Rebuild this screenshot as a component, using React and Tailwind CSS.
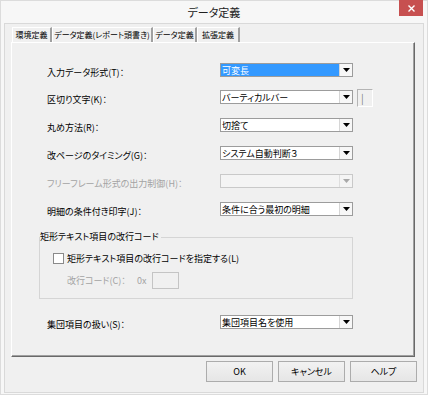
import React from 'react';

const Arrow = ({ disabled }) => (
    <svg width="7" height="4" viewBox="0 0 7 4">
        <polygon points="0,0 7,0 3.5,4" fill={disabled ? '#a8a8a8' : '#000'} />
    </svg>
);

const Combo = ({ value, selected, disabled }) => (
    <div
        className={`flex h-[14px] w-[133px] border ${
            disabled ? 'border-[#c9c9c9] bg-[#f4f4f4]' : 'border-[#9c9c9c] bg-white'
        }`}
    >
        <div
            className={`flex-1 flex items-center pl-[1px] text-[9px] leading-none whitespace-nowrap overflow-hidden ${
                selected ? 'bg-[#3399ff] text-white' : 'text-black'
            }`}
        >
            {value}
        </div>
        <div
            className={`w-[13px] flex items-center justify-center border-l ${
                disabled ? 'border-[#dedede] bg-[#f4f4f4]' : 'border-[#d6d6d6] bg-[#f7f7f7]'
            }`}
        >
            <Arrow disabled={disabled} />
        </div>
    </div>
);

const Row = ({ label, disabled, className, children }) => (
    <div className={`flex items-start h-[14px] pl-[8px] ${className}`}>
        <div
            className={`w-[173px] pt-[3px] leading-[14px] text-[9px] whitespace-nowrap ${
                disabled ? 'text-[#a3a3a3]' : 'text-black'
            }`}
        >
            {label}
        </div>
        {children}
    </div>
);

const tabs = [
    { label: '環境定義', w: 'w-[40px]' },
    { label: 'データ定義(レポート頭書き)', w: 'w-[101px]' },
    { label: 'データ定義', w: 'w-[44px]' },
    { label: '拡張定義', w: 'w-[43px]' },
];

export default function App() {
    return (
        <div className="w-[428px] h-[395px] bg-[#f7f7f7] border border-[#dcdcdc] flex flex-col font-['Noto_Sans_CJK_JP','Noto_Sans',sans-serif] [font-feature-settings:'palt'] select-none">
            {/* Title bar */}
            <div className="relative h-[22px] flex items-center justify-center">
                <span className="text-[11px] text-[#202020] pt-[1px]">データ定義</span>
                <div className="absolute right-[4px] -top-[1px] w-[24px] h-[16px] bg-[#c75050] flex items-center justify-center">
                    <svg width="7" height="7" viewBox="0 0 7 7">
                        <path d="M0.5 0.5 L6.5 6.5 M6.5 0.5 L0.5 6.5" stroke="#fff" strokeWidth="1.4" />
                    </svg>
                </div>
            </div>

            {/* Client area */}
            <div className="mx-[3px] mb-[1px] flex-1 bg-[#f0f0f0] border border-[#d9d9d9] flex flex-col">
                <div className="pt-[3px] pl-[6px] flex flex-col">
                    {/* Tabs */}
                    <div className="flex h-[15px] ml-[1px]">
                        {tabs.map((t) => (
                            <div
                                key={t.label}
                                className={`${t.w} flex items-center justify-center text-[8px] leading-none whitespace-nowrap text-black border-l border-t border-white border-r-2 border-r-[#a0a0a0] bg-[#f0f0f0]`}
                            >
                                {t.label}
                            </div>
                        ))}
                    </div>

                    {/* Panel */}
                    <div className="w-[404px] h-[315px] border-t border-l border-white border-r border-b border-r-[#696969] border-b-[#696969] shadow-[inset_-1px_-1px_0_#a0a0a0] pl-[27px] pt-[20px] flex flex-col">
                        <Row label="入力データ形式(T)：">
                            <Combo value="可変長" selected />
                        </Row>
                        <Row label="区切り文字(K)：" className="mt-[13px]">
                            <Combo value="バーティカルバー" />
                            <div className="ml-[4px] -mt-[1px] w-[16px] h-[18px] border border-[#b4b4b4] border-r-white border-b-white bg-[#f0f0f0] text-[10px] text-[#7a7a7a] leading-[16px] pl-[3px]">
                                |
                            </div>
                        </Row>
                        <Row label="丸め方法(R)：" className="mt-[14px]">
                            <Combo value="切捨て" />
                        </Row>
                        <Row label="改ページのタイミング(G)：" className="mt-[14px]">
                            <Combo value="システム自動判断３" />
                        </Row>
                        <Row label="フリーフレーム形式の出力制御(H)：" disabled className="mt-[14px]">
                            <Combo value="" disabled />
                        </Row>
                        <Row label="明細の条件付き印字(J)：" className="mt-[14px]">
                            <Combo value="条件に合う最初の明細" />
                        </Row>

                        {/* Group box */}
                        <div className="relative mt-[21px] w-[314px] h-[62px] border border-[#d5d5d5] pl-[13px] pt-[15px]">
                            <span className="absolute left-0 -top-[7px] bg-[#f0f0f0] pr-[2px] text-[9px] leading-[12px] text-black whitespace-nowrap">
                                矩形テキスト項目の改行コード
                            </span>
                            <div className="flex items-center h-[11px]">
                                <div className="w-[11px] h-[11px] border border-[#8a8a8a] bg-white" />
                                <span className="ml-[3px] text-[9px] leading-none text-black whitespace-nowrap">
                                    矩形テキスト項目の改行コードを指定する(L)
                                </span>
                            </div>
                            <div className="flex items-center mt-[8px] h-[17px] pl-[14px] text-[9px] text-[#a3a3a3] whitespace-nowrap">
                                <span className="w-[70px]">改行コード(C)：</span>
                                <span className="w-[15px]">0x</span>
                                <div className="w-[27px] h-[17px] border border-[#c4c4c4] bg-[#f0f0f0]" />
                            </div>
                        </div>

                        <Row label="集団項目の扱い(S)：" className="mt-[16px]">
                            <Combo value="集団項目名を使用" />
                        </Row>
                    </div>
                </div>

                {/* Buttons */}
                <div className="flex justify-end gap-[5px] pr-[6px] mt-[4px]">
                    {['OK', 'キャンセル', 'ヘルプ'].map((b) => (
                        <button
                            key={b}
                            className="w-[67px] h-[21px] border border-[#acacac] bg-gradient-to-b from-[#f2f2f2] to-[#e6e6e6] text-[9px] text-black leading-none"
                        >
                            {b}
                        </button>
                    ))}
                </div>
            </div>
        </div>
    );
}
